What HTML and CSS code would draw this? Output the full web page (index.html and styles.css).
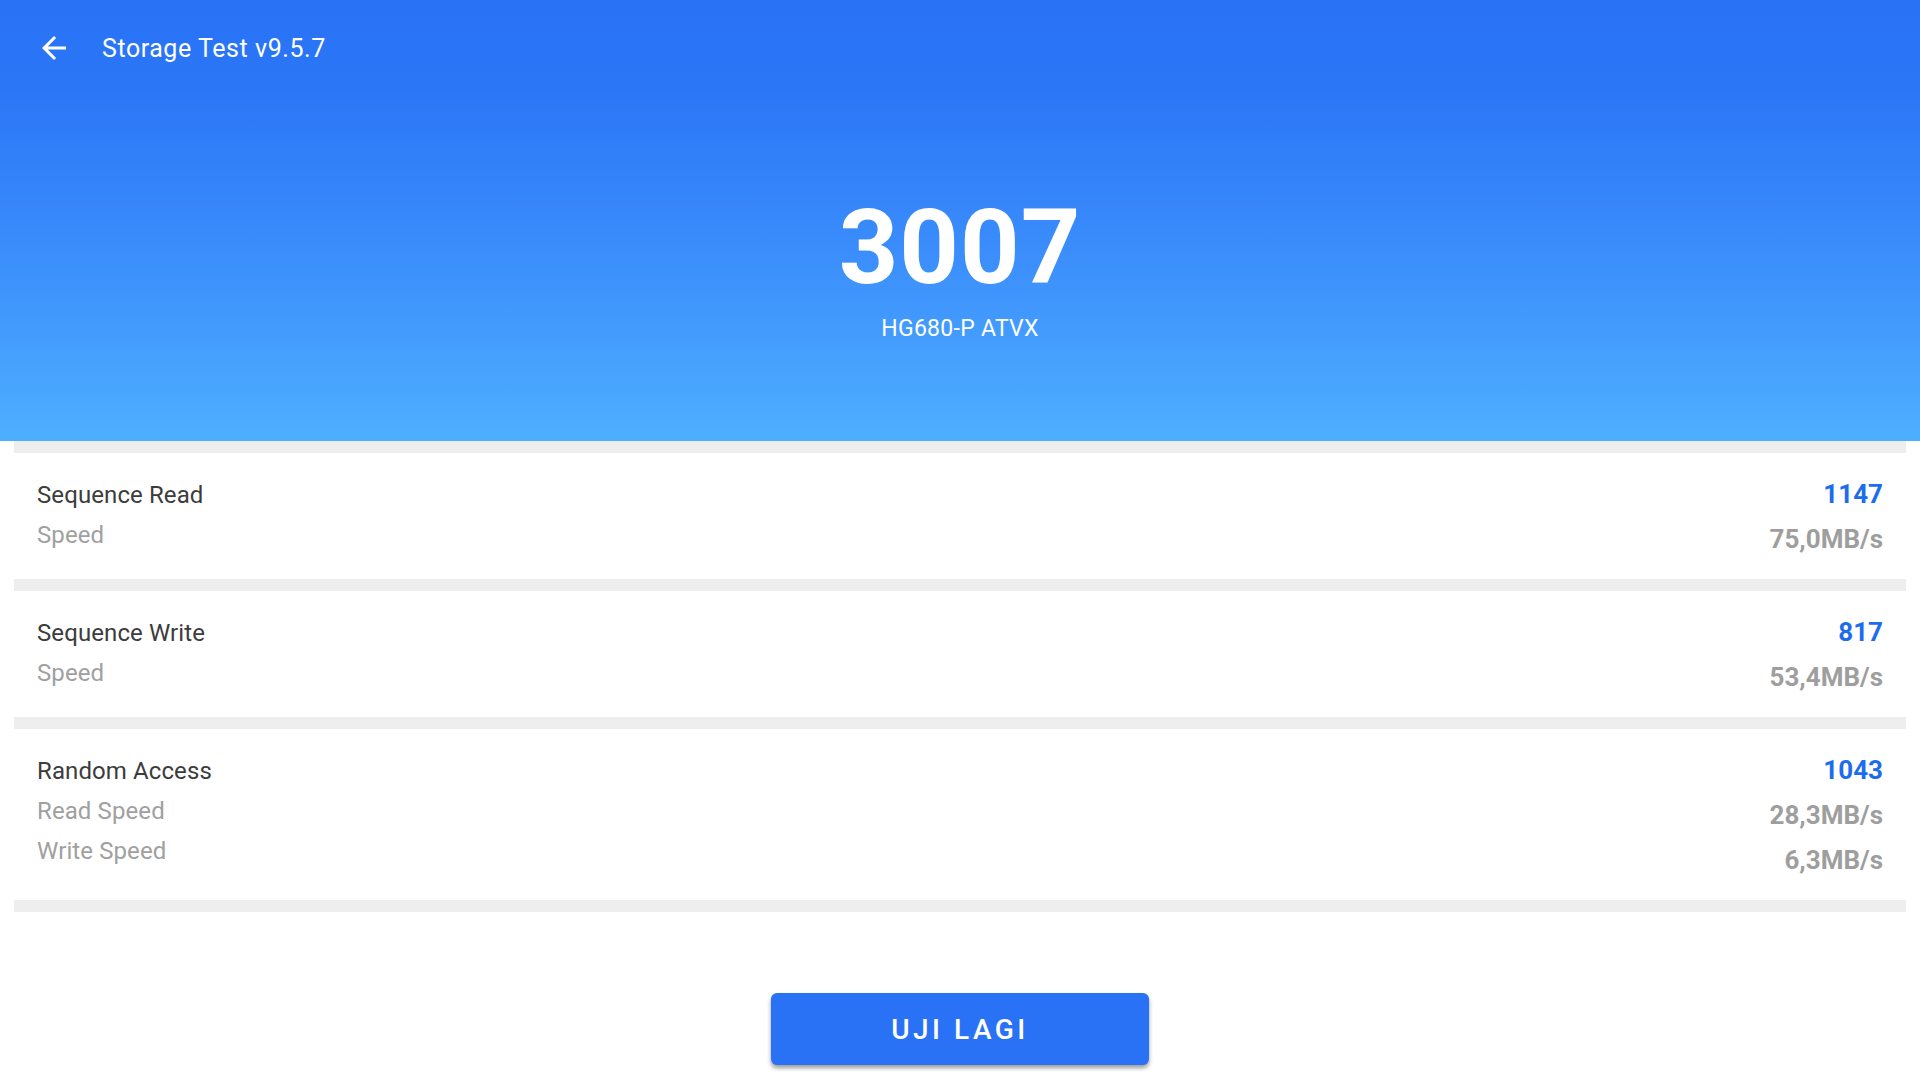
FILE: index.html
```html
<!DOCTYPE html>
<html lang="id">
<head>
<meta charset="utf-8">
<title>Storage Test</title>
<link rel="stylesheet" href="styles.css">
</head>
<body>
<header class="hero">
  <div class="toolbar">
    <span class="back">
      <svg viewBox="0 0 24 24" width="36" height="36"><path fill="#fff" d="M20 11H7.83l5.59-5.59L12 4l-8 8 8 8 1.41-1.41L7.83 13H20v-2z"/></svg>
    </span>
    <span class="title">Storage Test v9.5.7</span>
  </div>
  <div class="score">3007</div>
  <div class="model">HG680-P ATVX</div>
</header>
<main class="list">
  <div class="sep"></div>
  <section class="card">
    <div class="labels">
      <div class="label">Sequence Read</div>
      <div class="sub">Speed</div>
    </div>
    <div class="values">
      <div class="val">1147</div>
      <div class="subval">75,0MB/s</div>
    </div>
  </section>
  <div class="sep"></div>
  <section class="card">
    <div class="labels">
      <div class="label">Sequence Write</div>
      <div class="sub">Speed</div>
    </div>
    <div class="values">
      <div class="val">817</div>
      <div class="subval">53,4MB/s</div>
    </div>
  </section>
  <div class="sep"></div>
  <section class="card">
    <div class="labels">
      <div class="label">Random Access</div>
      <div class="sub">Read Speed</div>
      <div class="sub">Write Speed</div>
    </div>
    <div class="values">
      <div class="val">1043</div>
      <div class="subval">28,3MB/s</div>
      <div class="subval">6,3MB/s</div>
    </div>
  </section>
  <div class="sep"></div>
</main>
<div class="actions">
  <button class="btn">UJI LAGI</button>
</div>
</body>
</html>
```
FILE: styles.css
```css
html, body {
  margin: 0;
  padding: 0;
  background: #ffffff;
  font-family: Roboto, "Noto Sans", "Liberation Sans", sans-serif;
}
body {
  width: 1920px;
  height: 1080px;
  overflow: hidden;
}
.hero {
  height: 441px;
  background: linear-gradient(180deg, #2972f6 0px, #2b76f7 90px, #3a8cfb 245px, #4eafff 441px);
  color: #fff;
  display: flex;
  flex-direction: column;
  align-items: center;
}
.toolbar {
  align-self: stretch;
  height: 96px;
  display: flex;
  align-items: center;
  padding-left: 36px;
}
.back {
  width: 36px;
  height: 36px;
  display: flex;
}
.title {
  margin-left: 30px;
  font-size: 25px;
  letter-spacing: 0.55px;
}
.score {
  margin-top: 100px;
  font-size: 104px;
  line-height: 1;
  font-weight: 700;
  letter-spacing: 1px;
}
.model {
  margin-top: 15px;
  font-size: 23px;
  line-height: 1.2;
  letter-spacing: 0.3px;
}
.list {
  padding: 0 14px;
}
.sep {
  height: 12px;
  background: #eeeeee;
}
.card {
  background: #fff;
  display: flex;
  justify-content: space-between;
  align-items: flex-start;
  padding: 0 23px;
}
.labels {
  padding: 22px 0 24px;
  font-size: 24px;
  line-height: 40px;
  letter-spacing: 0.1px;
}
.label {
  color: #3c3c3c;
}
.sub {
  color: #a0a0a0;
}
.values {
  padding: 19px 0 17px;
  font-size: 26px;
  line-height: 45px;
  font-weight: 700;
  text-align: right;
}
.val {
  color: #1d6ced;
}
.subval {
  color: #9e9e9e;
}
.actions {
  display: flex;
  justify-content: center;
  margin-top: 81px;
}
.btn {
  width: 378px;
  height: 72px;
  border: none;
  border-radius: 6px;
  background: #2a72f5;
  color: #fff;
  font-family: Roboto, "Noto Sans", sans-serif;
  font-size: 28px;
  font-weight: 500;
  letter-spacing: 3.5px;
  box-shadow: 0 3px 4px rgba(0, 0, 0, 0.4);
}
```
